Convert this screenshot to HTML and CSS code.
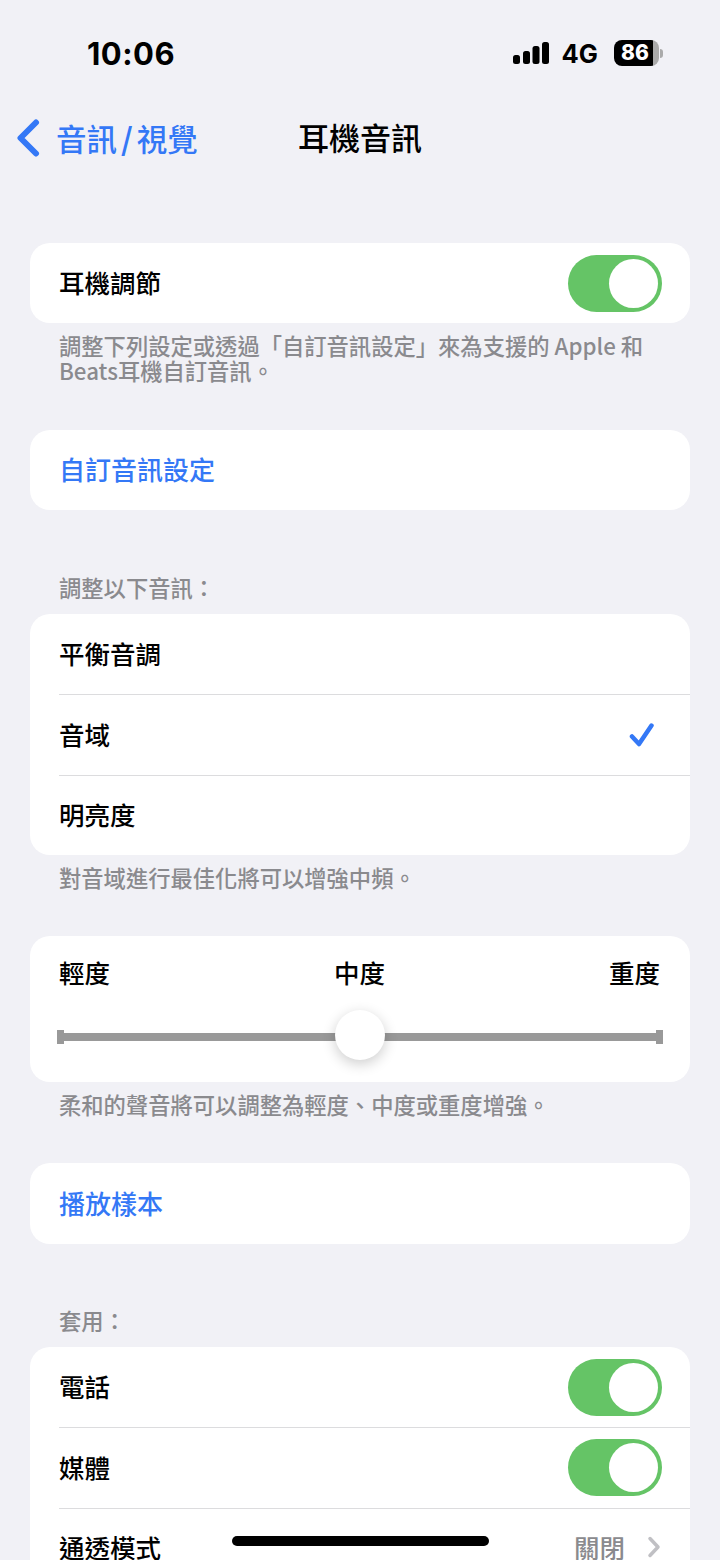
FILE: index.html
```html
<!DOCTYPE html>
<html lang="zh-Hant">
<head>
    <meta charset="UTF-8">
    <meta name="viewport" content="width=device-width, initial-scale=1.0">
    <title>耳機音訊</title>
    <link rel="stylesheet" href="styles.css">
</head>
<body>
    <div class="phone">
        <div class="status-bar">
            <span class="time">10:06</span>
            <div class="status-icons">
                <svg class="signal" width="36" height="24" viewBox="0 0 36 24">
                    <rect x="0" y="14" width="7" height="9" rx="2.5"/>
                    <rect x="10" y="10" width="7" height="13" rx="2.5"/>
                    <rect x="19.500" y="5" width="7" height="18" rx="2.5"/>
                    <rect x="29" y="1" width="7" height="22" rx="2.5"/>
                </svg>
                <span class="network">4G</span>
                <div class="battery">
                    <div class="battery-body"><span class="battery-level">86</span></div>
                    <span class="battery-cap"></span>
                </div>
            </div>
        </div>

        <nav class="nav">
            <a class="back">
                <svg width="26" height="38" viewBox="0 0 26 38">
                    <path d="M21 3.500 L5.500 19 L21 34.500" fill="none" stroke="#3478f6" stroke-width="6" stroke-linecap="round" stroke-linejoin="round"/>
                </svg>
                <span class="back-label">音訊<i class="slash">/</i>視覺</span>
            </a>
            <h1 class="nav-title">耳機音訊</h1>
        </nav>

        <section class="group first">
            <div class="card">
                <div class="row">
                    <span>耳機調節</span>
                    <span class="switch"><span class="knob"></span></span>
                </div>
            </div>
            <p class="note">調整下列設定或透過「自訂音訊設定」來為支援的 Apple 和 Beats耳機自訂音訊。</p>
        </section>

        <section class="group after-note">
            <div class="card">
                <div class="row link">自訂音訊設定</div>
            </div>
        </section>

        <section class="group">
            <p class="heading">調整以下音訊：</p>
            <div class="card">
                <div class="row">平衡音調</div>
                <div class="row">
                    <span>音域</span>
                    <svg class="check" width="26" height="26" viewBox="0 0 26 26">
                        <path d="M3 14.500 L10 22 L22.500 3.500" fill="none" stroke="#3478f6" stroke-width="4.500" stroke-linecap="round" stroke-linejoin="round"/>
                    </svg>
                </div>
                <div class="row">明亮度</div>
            </div>
            <p class="note">對音域進行最佳化將可以增強中頻。</p>
        </section>

        <section class="group tone">
            <div class="card slider-card">
                <div class="slider-labels">
                    <span>輕度</span>
                    <span>中度</span>
                    <span>重度</span>
                </div>
                <div class="slider">
                    <span class="tick"></span>
                    <span class="track"></span>
                    <span class="tick"></span>
                    <span class="thumb"></span>
                </div>
            </div>
            <p class="note">柔和的聲音將可以調整為輕度、中度或重度增強。</p>
        </section>

        <section class="group sample">
            <div class="card">
                <div class="row link">播放樣本</div>
            </div>
        </section>

        <section class="group">
            <p class="heading">套用：</p>
            <div class="card">
                <div class="row">
                    <span>電話</span>
                    <span class="switch"><span class="knob"></span></span>
                </div>
                <div class="row">
                    <span>媒體</span>
                    <span class="switch"><span class="knob"></span></span>
                </div>
                <div class="row">
                    <span>通透模式</span>
                    <span class="detail">關閉
                        <svg width="14" height="22" viewBox="0 0 14 22">
                            <path d="M3 2.500 L11 11 L3 19.500" fill="none" stroke="#c0c0c4" stroke-width="3.500" stroke-linecap="round" stroke-linejoin="round"/>
                        </svg>
                    </span>
                </div>
            </div>
        </section>

        <div class="home-bar"></div>
    </div>
</body>
</html>
```

FILE: styles.css
```css
body {
    margin: 0;
    background: #f1f1f6;
    color: #000;
    font-family: "Noto Sans CJK TC", "Noto Sans", sans-serif;
}
.phone {
    position: relative;
    width: 720px;
    height: 1560px;
    overflow: hidden;
}
.status-bar {
    display: flex;
    justify-content: space-between;
    align-items: center;
    height: 48px;
    padding: 29px 57px 0 87px;
}
.time {
    font-family: Inter, sans-serif;
    font-size: 31px;
    font-weight: 700;
    letter-spacing: 0.5px;
}
.status-icons {
    display: flex;
    align-items: center;
}
.signal {
    margin-right: 13px;
}
.network {
    font-family: Inter, sans-serif;
    font-size: 25.500px;
    font-weight: 700;
    margin-right: 16px;
}
.battery {
    display: flex;
    align-items: center;
}
.battery-body {
    width: 45px;
    height: 26px;
    border-radius: 8px;
    background: linear-gradient(to right, #000 0, #000 39px, #aaa 39px);
    display: flex;
    align-items: center;
    padding-left: 7px;
    box-sizing: border-box;
}
.battery-level {
    color: #fff;
    font-family: Inter, sans-serif;
    font-size: 21px;
    font-weight: 800;
    line-height: 26px;
}
.battery-cap {
    width: 3px;
    height: 9px;
    margin-left: 1px;
    background: #aaa;
    border-radius: 0 3px 3px 0;
}

.nav {
    position: relative;
    display: flex;
    align-items: center;
    justify-content: center;
    height: 56px;
    margin-top: 32px;
}
.back {
    position: absolute;
    left: 15px;
    top: 10px;
    display: flex;
    align-items: center;
    gap: 15px;
    color: #3478f6;
}
.back-label {
    font-size: 30.500px;
    font-weight: 500;
    line-height: 34px;
}
.slash {
    font-style: normal;
    font-weight: 700;
    margin: 0 4px;
}
.nav-title {
    margin: 0;
    font-size: 31px;
    font-weight: 500;
    line-height: 40px;
}

.group {
    margin: 0 30px;
}
.group.first {
    margin-top: 78px;
}
.group.after-note {
    margin-top: 47px;
}
.group.tone {
    margin-top: 46px;
}
.group.sample {
    margin-top: 46px;
    margin-bottom: -1px;
}
.group.sample .row {
    height: 81px;
}
.card {
    background: #fff;
    border-radius: 20px;
    overflow: hidden;
}
.row {
    display: flex;
    justify-content: space-between;
    align-items: center;
    height: 80px;
    padding-right: 28px;
    padding-bottom: 3px;
    margin-left: 29px;
    font-size: 25.500px;
    font-weight: 500;
    box-sizing: border-box;
}
.row + .row {
    border-top: 1px solid #dcdcde;
    height: 80.500px;
}
.row.link {
    color: #3478f6;
    font-size: 26px;
}
.note,
.heading {
    margin: 0;
    padding: 0 29px;
    color: #8a8a8e;
    font-size: 22.300px;
    font-weight: 500;
    line-height: 25px;
}
.note {
    padding-top: 10px;
}
.heading {
    margin-top: 65px;
    padding-bottom: 14px;
}

.switch {
    display: block;
    width: 94px;
    height: 57px;
    margin-top: 3px;
    border-radius: 29px;
    background: #65c466;
    position: relative;
}
.knob {
    position: absolute;
    top: 4px;
    right: 4px;
    width: 49px;
    height: 49px;
    border-radius: 50%;
    background: #fff;
}
.check {
    margin-top: 3px;
    margin-right: 7px;
}
.detail {
    display: flex;
    align-items: center;
    gap: 22px;
    margin-right: 1px;
    color: #8a8a8e;
}

.slider-card {
    height: 146px;
    padding: 18px 30px 0 29px;
    box-sizing: border-box;
}
.slider-labels {
    display: flex;
    justify-content: space-between;
    font-size: 25.500px;
    font-weight: 500;
    line-height: 36px;
}
.slider {
    position: relative;
    display: flex;
    align-items: center;
    height: 14px;
    margin: 40px -3px 0 -2px;
}
.tick {
    width: 7px;
    height: 14px;
    background: #999;
    flex: none;
}
.track {
    flex: 1;
    height: 8px;
    background: #999;
}
.thumb {
    position: absolute;
    left: 50%;
    top: -20px;
    width: 50px;
    height: 50px;
    margin-left: -25px;
    border-radius: 50%;
    background: #fff;
    box-shadow: 0 4px 14px rgba(0,0,0,0.2);
}

.home-bar {
    position: absolute;
    left: 232px;
    bottom: 14px;
    width: 257px;
    height: 10px;
    border-radius: 5px;
    background: #000;
}
```
